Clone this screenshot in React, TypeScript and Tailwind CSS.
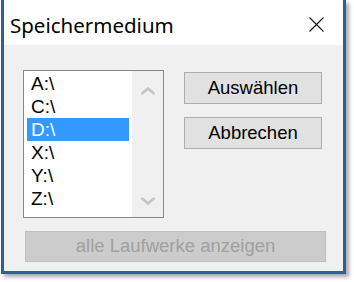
import React from "react"

const drives = ["A:\\", "C:\\", "D:\\", "X:\\", "Y:\\", "Z:\\"]

function Chevron({ up }: { up: boolean }) {
  return (
    <svg width="16" height="8" viewBox="0 0 16 8" className="block">
      <path
        d={up ? "M1.5 7 L8 1.5 L14.5 7" : "M1.5 1 L8 6.5 L14.5 1"}
        fill="none"
        stroke="#c4c4c4"
        strokeWidth="2.6"
      />
    </svg>
  )
}

export default function App() {
  const selected = 2

  return (
    <div className="w-[354px] h-[282px] bg-white overflow-hidden font-['Liberation_Sans',Arial,sans-serif]">
      <div className="ml-[1px] w-[345px] h-[274px] flex flex-col border-x-[3px] border-b-[3px] border-[#2f5e98] shadow-[3px_3px_4px_rgba(0,0,0,0.35)]">
        {/* Title bar */}
        <div className="h-[45px] shrink-0 bg-white flex items-start justify-between pl-[6px] pr-[19px]">
          <span className="mt-[15px] text-[20.5px] text-black font-['Noto_Sans',sans-serif] leading-none">
            Speichermedium
          </span>
          <svg width="15" height="15" viewBox="0 0 15 15" className="mt-[17px]">
            <path d="M0.5 0.5 L14.5 14.5 M14.5 0.5 L0.5 14.5" stroke="#111" strokeWidth="1.1" />
          </svg>
        </div>

        {/* Body */}
        <div className="flex-1 bg-[#f0f0f0] pl-[19px] pt-[25px]">
          <div className="flex gap-[20px]">
            {/* List box */}
            <div className="w-[141px] h-[148px] border border-[#828790] bg-white flex">
              <div className="flex-1 pl-[3px] pt-[1px]">
                {drives.map((d, i) => (
                  <div
                    key={d}
                    className={
                      i === selected
                        ? "h-[23px] w-[102px] bg-[#3399ff] text-white pl-[4px] text-[19px] leading-[23px]"
                        : "h-[23px] w-[102px] text-black pl-[4px] text-[19px] leading-[23px]"
                    }
                  >
                    {d}
                  </div>
                ))}
              </div>
              <div className="w-[31px] bg-[#f0f0f0] flex flex-col items-center justify-between pt-[16px] pb-[12px]">
                <Chevron up />
                <Chevron up={false} />
              </div>
            </div>

            {/* Buttons */}
            <div className="mt-[2px] flex flex-col gap-[13px]">
              <button className="w-[138px] h-[32px] bg-[#e1e1e1] border border-[#adadad] text-black text-[18.5px] leading-none">
                Auswählen
              </button>
              <button className="w-[138px] h-[32px] bg-[#e1e1e1] border border-[#adadad] text-black text-[18.5px] leading-none">
                Abbrechen
              </button>
            </div>
          </div>

          <button
            disabled
            className="mt-[13px] ml-[2px] w-[301px] h-[31px] bg-[#cccccc] border border-[#bfbfbf] text-[#a0a0a0] text-[18.5px] leading-none"
          >
            alle Laufwerke anzeigen
          </button>
        </div>
      </div>
    </div>
  )
}
